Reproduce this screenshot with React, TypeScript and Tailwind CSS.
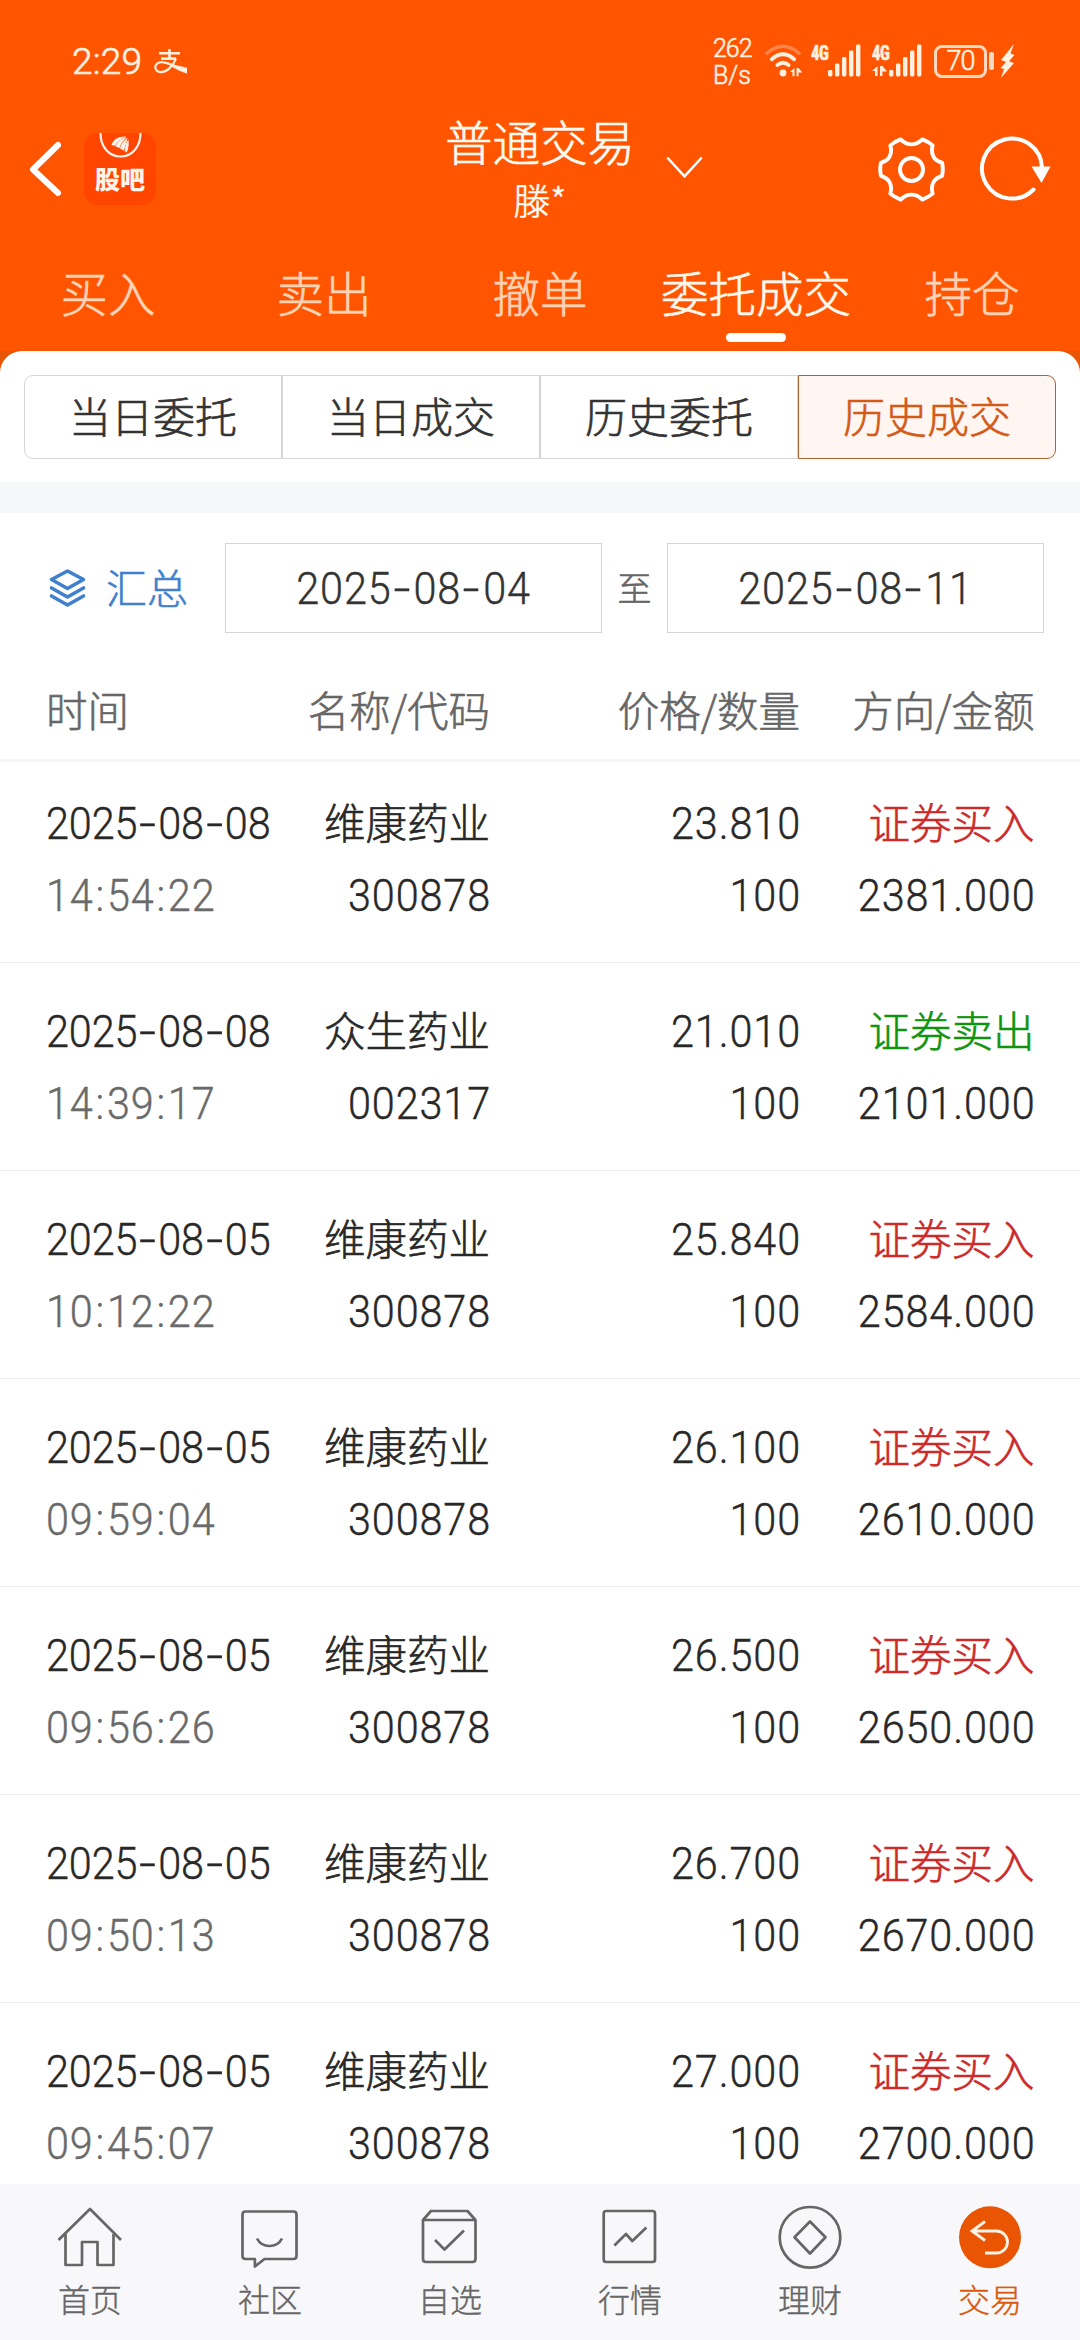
import React from "react";

type Trade = {
  date: string;
  time: string;
  name: string;
  code: string;
  price: string;
  qty: string;
  side: "buy" | "sell";
  amount: string;
};

const trades: Trade[] = [
  { date: "2025-08-08", time: "14:54:22", name: "维康药业", code: "300878", price: "23.810", qty: "100", side: "buy", amount: "2381.000" },
  { date: "2025-08-08", time: "14:39:17", name: "众生药业", code: "002317", price: "21.010", qty: "100", side: "sell", amount: "2101.000" },
  { date: "2025-08-05", time: "10:12:22", name: "维康药业", code: "300878", price: "25.840", qty: "100", side: "buy", amount: "2584.000" },
  { date: "2025-08-05", time: "09:59:04", name: "维康药业", code: "300878", price: "26.100", qty: "100", side: "buy", amount: "2610.000" },
  { date: "2025-08-05", time: "09:56:26", name: "维康药业", code: "300878", price: "26.500", qty: "100", side: "buy", amount: "2650.000" },
  { date: "2025-08-05", time: "09:50:13", name: "维康药业", code: "300878", price: "26.700", qty: "100", side: "buy", amount: "2670.000" },
  { date: "2025-08-05", time: "09:45:07", name: "维康药业", code: "300878", price: "27.000", qty: "100", side: "buy", amount: "2700.000" },
];

const NUM = "font-['Roboto',sans-serif] text-[45px] leading-[72px] font-light whitespace-nowrap [-webkit-text-stroke:0.4px]";

/** Splits a date at its hyphens so that each can be drawn as a wide dash. */
function DateText({ value }: { value: string }) {
  return (
    <>
      {value.split("-").map((part, i) => (
        <React.Fragment key={i}>
          {i > 0 && <span className="mx-[5px] inline-block scale-x-[1.45]">-</span>}
          {part}
        </React.Fragment>
      ))}
    </>
  );
}

function TimeText({ value }: { value: string }) {
  return (
    <>
      {value.split(":").map((part, i) => (
        <React.Fragment key={i}>
          {i > 0 && <span className="mx-[2px]">:</span>}
          {part}
        </React.Fragment>
      ))}
    </>
  );
}

function AlipayIcon() {
  return (
    <svg className="ml-3 h-[25px] w-[33px]" viewBox="0 0 33 25" fill="none" stroke="currentColor">
      <path d="M5 4.2H26M7 9.6H22M15.5 0V9.6" strokeWidth="2.6" />
      <path d="M22 9.6C19 17 13 23.2 7 23.2C3 23.2 1.3 20.5 1.3 18.3C1.3 15.5 4 13 8 13.2C15 13.6 22 18 32 22" strokeWidth="2.2" />
      <path d="M19 15.5L33 18.7V24.5C28 23.5 23 20.5 17.5 17.6Z" fill="currentColor" stroke="none" />
    </svg>
  );
}

function DataArrows() {
  return (
    <>
      <path d="M5.5 0V10H3V5H0Z" />
      <path d="M8 0H10.4L15 5.4H10.4V10H8Z" />
    </>
  );
}

function WifiIcon() {
  return (
    <svg className="ml-[14px] h-[34px] w-[38px]" viewBox="0 0 38 34" fill="none" stroke="currentColor" strokeLinecap="round">
      <path d="M2 9.2Q18 -4.8 34 9.2" strokeWidth="3.4" opacity="0.32" />
      <path d="M6.8 15.2Q18 5.4 29.2 15.2" strokeWidth="3.8" />
      <path d="M12.4 21Q18 16.6 23.6 21" strokeWidth="3.8" />
      <circle cx="18" cy="29" r="3.4" fill="currentColor" stroke="none" />
      <g transform="translate(25 24) scale(0.82)" fill="currentColor" stroke="none">
        <DataArrows />
      </g>
    </svg>
  );
}

function SignalIcon({ data }: { data?: boolean }) {
  return (
    <div className="relative h-[34px] w-[50px]">
      <span className="absolute top-[-1px] left-0 origin-left scale-x-[0.84] font-['Roboto'] text-[20px] leading-[20px] font-bold tracking-[-0.5px] [font-stretch:75%]">4G</span>
      <svg className="h-[34px] w-[50px]" viewBox="0 0 50 34" fill="currentColor">
        {data && (
          <g transform="translate(0 22)">
            <DataArrows />
          </g>
        )}
        <rect x="17" y="26" width="4.4" height="6.5" rx="1.4" />
        <rect x="24" y="19.5" width="4.4" height="13" rx="1.4" />
        <rect x="31" y="13" width="4.4" height="19.5" rx="1.4" />
        <rect x="38" y="6.5" width="4.4" height="26" rx="1.4" />
        <rect x="45" y="0.5" width="4.4" height="32" rx="1.4" />
      </svg>
    </div>
  );
}

function StatusBar() {
  return (
    <div className="flex h-[106px] items-end pr-[65px] pl-[72px] text-[#fff0e0]">
      <div className="flex h-[90px] w-full items-center">
        <span className="font-['Roboto'] text-[37px] leading-none tracking-[0.2px] [-webkit-text-stroke:0.7px]">2:29</span>
        <AlipayIcon />
        <div className="ml-auto flex w-[38px] flex-col pt-[1px] font-['Roboto'] text-[25px] leading-[27px] tracking-[-1px] whitespace-nowrap">
          <span>262</span>
          <span className="tracking-normal">B/s</span>
        </div>
        <WifiIcon />
        <div className="ml-[8px] flex gap-[11px]">
          <SignalIcon />
          <SignalIcon data />
        </div>
        <div className="ml-[12px] flex items-center gap-[2px]">
          <div className="flex h-[33px] w-[53px] items-center justify-center rounded-[8px] border-3 border-current/85 font-['Roboto'] text-[27px] leading-none tracking-[-1px]">70</div>
          <div className="h-[18px] w-[5px] rounded-[2px] bg-current/85" />
        </div>
        <svg className="ml-[6px] h-[34px] w-[15px]" viewBox="0 0 15 34" fill="currentColor">
          <path d="M14 0L1 16L6 18L0.5 24L4 25L1 34L14 19L9 17.2L14.5 11L10.5 9.6Z" />
        </svg>
      </div>
    </div>
  );
}

function GubaLogo() {
  return (
    <div className="ml-[23px] h-[72px] w-[72px] overflow-hidden rounded-[14px] bg-[#ff4500] text-[#fff3ec]">
      <svg className="h-[26px] w-[72px]" viewBox="0 0 72 26" fill="none">
        <path d="M16.5 0C16.5 14 25 23.5 36.5 23.5S56.5 14 56.5 0" stroke="currentColor" strokeWidth="2.2" />
        <g fill="currentColor">
          <path d="M27.500 12C29 6.500 35 3 42 3.500C37 5.500 33 9 31 12.800Z" />
          <path d="M31.500 13.500C33 9 37.500 5 42.500 4C39.500 7.500 36.800 11 35.500 15Z" />
          <path d="M36 15.500C37 11.500 40 7 43.500 5C42.500 9.500 41 13.500 39.800 17.500Z" />
          <path d="M40.500 18C41 13.500 42.500 9 44.300 6.500C45.300 10.500 44.500 15.500 42.800 19.500Z" />
        </g>
      </svg>
      <div className="mt-[7px] flex justify-center text-[25px] leading-[24px] font-black [-webkit-text-stroke:0]">股吧</div>
    </div>
  );
}

function GearIcon() {
  return (
    <svg className="h-[65px] w-[67px]" viewBox="0 0 68 66" fill="none" stroke="currentColor" strokeWidth="4" strokeLinejoin="round">
      <path d="M23 2.500C30 9 38 9 45 2.500C49 4 52 5.500 55.500 8.500C53 18 57 24 65 26C66 30.500 66 35 65 39.500C57 42 53 48 55.500 57.500C52 60.500 49 62 45 63.500C38 57 30 57 23 63.500C19 62 16 60.500 12.500 57.500C15 48 11 42 3 39.500C2 35 2 30.500 3 26C11 24 15 18 12.500 8.500C16 5.500 19 4 23 2.500Z" />
      <circle cx="34" cy="33" r="11.700" />
    </svg>
  );
}

function RefreshIcon() {
  return (
    <svg className="h-[66px] w-[72px]" viewBox="0 0 72 66" fill="none">
      <path d="M54.500 53.500A30 30 0 1 1 63 32" stroke="currentColor" strokeWidth="4" strokeLinecap="round" />
      <path d="M52.500 30.500H71.500L62.500 47Z" fill="currentColor" />
    </svg>
  );
}

function TitleBar() {
  return (
    <div className="grid h-[126px] grid-cols-[1fr_auto_1fr] text-white">
      <div className="flex items-center pl-[28px]">
        <svg className="h-[56px] w-[33px]" viewBox="0 0 33 56" fill="none" stroke="currentColor" strokeWidth="6" strokeLinecap="round" strokeLinejoin="round">
          <path d="M30 4L5 28.500L30 52" />
        </svg>
        <GubaLogo />
      </div>
      <div className="flex flex-col items-center text-[#fffaf2]">
        <div className="mt-[7px] text-[47.500px] leading-[56px]">普通交易</div>
        <div className="mt-[9px] text-[36.5px] leading-[44px]">滕*</div>
      </div>
      <div className="flex items-center pr-[29px]">
        <svg className="mt-[-2px] ml-[31px] h-[24px] w-[37px]" viewBox="0 0 38 24" fill="none" stroke="currentColor" strokeWidth="2.600" strokeLinecap="round">
          <path d="M2 2L19 20.500L36 2" />
        </svg>
        <div className="ml-auto flex items-center gap-[34px]">
          <GearIcon />
          <RefreshIcon />
        </div>
      </div>
    </div>
  );
}

function MainTabs() {
  const tabs = ["买入", "卖出", "撤单", "委托成交", "持仓"];
  return (
    <div className="grid h-[119px] grid-cols-5 text-[47.5px] leading-[64px]">
      {tabs.map((t) => (
        <div key={t} className={t === "委托成交" ? "flex flex-col items-center pt-[28px] text-[#fff8ee]" : "flex flex-col items-center pt-[28px] text-[#ffd3b5]"}>
          <span className="whitespace-nowrap">{t}</span>
          {t === "委托成交" && <div className="mt-[9px] h-[9px] w-[60px] rounded-full bg-white" />}
        </div>
      ))}
    </div>
  );
}

function Segments() {
  const base = "flex h-[84px] items-center justify-center border pb-[5px] first:rounded-l-[9px] last:rounded-r-[9px]";
  return (
    <div className="bg-[#e85504]">
      <div className="grid grid-cols-4 rounded-t-[22px] bg-white px-6 pt-6 pb-[23px] text-[42px]">
        {["当日委托", "当日成交", "历史委托"].map((t) => (
          <div key={t} className={`${base} border-[#d3d6d6] text-[#333]`}>{t}</div>
        ))}
        <div className={`${base} border-[#b0622f] bg-[#fff5f1] text-[#d35a17]`}>历史成交</div>
      </div>
    </div>
  );
}

function DateBox({ value }: { value: string }) {
  return (
    <div className={`${NUM} flex h-[90px] w-[377px] items-center justify-center border border-[#d5d5d5] pt-px tracking-[0.95px] text-[#333]`}>
      <span className="inline-block scale-x-[0.92]">
        <DateText value={value} />
      </span>
    </div>
  );
}

function DateRange() {
  return (
    <div className="flex items-center pt-[30px] pl-[48px]">
      <svg className="h-[40px] w-[39px] text-[#4080cc]" viewBox="0 0 39 40" fill="none" stroke="currentColor" strokeWidth="3.600" strokeLinecap="round" strokeLinejoin="round">
        <path d="M19.500 3L35.500 11.500L19.500 20.500L3.500 11.500Z" />
        <path d="M3.500 20L19.500 29L35.500 20" />
        <path d="M3.500 28L19.500 37L35.500 28" />
      </svg>
      <div className="ml-[19px] w-[119px] pb-[3px] text-[41px] text-[#4080cc]">汇总</div>
      <DateBox value="2025-08-04" />
      <div className="w-[65px] pb-[3px] text-center text-[34px] text-[#666]">至</div>
      <DateBox value="2025-08-11" />
    </div>
  );
}

const COLS = "grid grid-cols-[240px_204px_310px_234.5px] pl-[46px] text-right";

function TableHead() {
  return (
    <div className={`${COLS} mt-[47px] h-[82px] border-b-3 border-[#f6f6f6] text-[41.5px] leading-[58px] text-[#666]`}>
      <span className="text-left">时间</span>
      <span>名称/代码</span>
      <span>价格/数量</span>
      <span>方向/金额</span>
    </div>
  );
}

const RIGHT_NUM = `${NUM} origin-right translate-x-px scale-x-[0.92] tracking-[0.95px] pt-px`;

function Row({ t }: { t: Trade }) {
  return (
    <div className={`${COLS} h-[208px] shrink-0 border-b border-[#ececec] pt-[32px] text-[#282828] first:h-[201px] first:pt-[25px]`}>
      <div className={`${NUM} origin-left scale-x-[0.92] pt-px text-left`}>
        <div className="tracking-[-0.15px]">
          <DateText value={t.date} />
        </div>
        <div className="tracking-[0.95px] text-[#6a6a6a]">
          <TimeText value={t.time} />
        </div>
      </div>
      <div>
        <div className="h-[72px] text-[41.5px] leading-[68px]">{t.name}</div>
        <div className={RIGHT_NUM}>{t.code}</div>
      </div>
      <div className={RIGHT_NUM}>
        <div>{t.price}</div>
        <div>{t.qty}</div>
      </div>
      <div>
        <div className={t.side === "buy" ? "h-[72px] text-[41.5px] leading-[68px] text-[#cd2a2a]" : "h-[72px] text-[41.5px] leading-[68px] text-[#109410]"}>
          {t.side === "buy" ? "证券买入" : "证券卖出"}
        </div>
        <div className={RIGHT_NUM}>{t.amount}</div>
      </div>
    </div>
  );
}

const navItems = [
  {
    label: "首页",
    icon: (
      <>
        <path d="M8.500 46L40 15L71 46" />
        <path d="M15.500 40V71H32V48H47.500V71H63.500V40" />
      </>
    ),
  },
  {
    label: "社区",
    icon: (
      <>
        <path d="M15.500 17.500H63.500Q66.500 17.500 66.500 20.500V62Q66.500 65 63.500 65H34.500L24.900 72.500V65H15.500Q12.500 65 12.500 62V20.500Q12.500 17.500 15.500 17.500Z" />
        <path d="M27 44.500C32 54.500 47 54.500 52 44.500" />
      </>
    ),
  },
  {
    label: "自选",
    icon: (
      <>
        <path d="M13 26H65.500V65Q65.500 68 62.500 68H16Q13 68 13 65V26L21 17H57.500L65.500 26" />
        <path d="M25 46L34.500 55.500L54 36.500" />
      </>
    ),
  },
  {
    label: "行情",
    icon: (
      <>
        <rect x="13.700" y="17" width="51.300" height="51" rx="2.500" />
        <path d="M24.400 51.500L36 40L42.300 47L56.400 33.500" />
      </>
    ),
  },
  {
    label: "理财",
    icon: (
      <>
        <circle cx="40" cy="43.300" r="30.300" />
        <path d="M40 27.500L55.500 43.300L40 59.500L24.500 43.300Z" />
      </>
    ),
  },
];

function BottomNav() {
  return (
    <div className="grid h-[156px] shrink-0 grid-cols-6 bg-[#f8f8fa] pt-[10px] text-center text-[32px] leading-[44px] text-[#666] [-webkit-text-stroke:0.4px]">
      {navItems.map((n) => (
        <div key={n.label} className="flex flex-col items-center">
          <svg className="h-[82px] w-[80px]" viewBox="0 0 80 82" fill="none" stroke="currentColor" strokeWidth="2.700" strokeLinejoin="round">{n.icon}</svg>
          <span>{n.label}</span>
        </div>
      ))}
      <div className="flex flex-col items-center text-[#d8590f]">
        <svg className="h-[82px] w-[80px]" viewBox="0 0 80 82" fill="none">
          <circle cx="40" cy="43.300" r="31" fill="#ea5504" />
          <path d="M35 27.500L22 37L35 46.500M22 37H46.500A11 11 0 0 1 46.500 59H35" stroke="#fff3e6" strokeWidth="2.800" />
        </svg>
        <span>交易</span>
      </div>
    </div>
  );
}

export default function App() {
  return (
    <div className="flex h-[2340px] w-[1080px] flex-col overflow-hidden bg-white font-['Noto_Sans_CJK_SC',sans-serif] font-light [-webkit-text-stroke:0.6px]">
      <header className="shrink-0 bg-[#ff5500]">
        <StatusBar />
        <TitleBar />
        <MainTabs />
      </header>
      <main className="flex min-h-0 flex-1 flex-col overflow-hidden">
        <Segments />
        <div className="h-[31px] shrink-0 bg-[#f6f7f9]" />
        <DateRange />
        <TableHead />
        <div className="flex min-h-0 flex-1 flex-col overflow-hidden">
          {trades.map((t) => (
            <Row key={t.date + t.time} t={t} />
          ))}
        </div>
      </main>
      <BottomNav />
    </div>
  );
}
